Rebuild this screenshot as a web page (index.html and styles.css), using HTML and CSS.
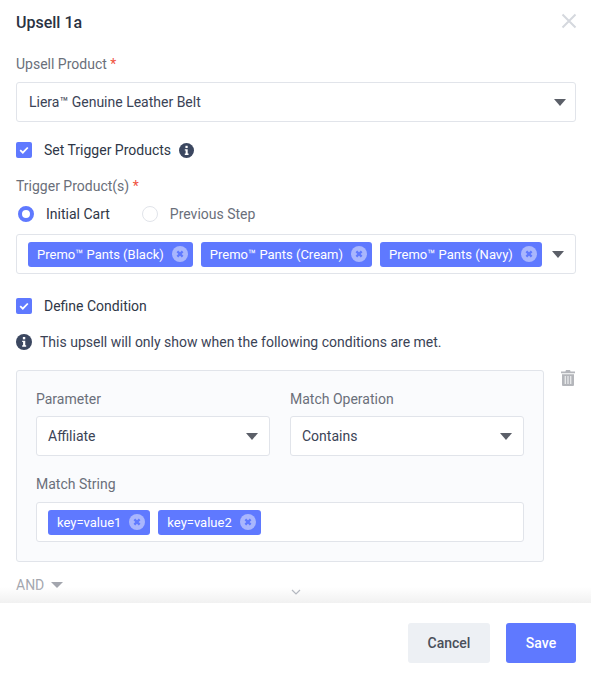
FILE: index.html
```html
<!DOCTYPE html>
<html lang="en">
<head>
<meta charset="utf-8">
<title>Upsell 1a</title>
<link rel="stylesheet" href="styles.css">
</head>
<body>
<div class="modal">
  <div class="content">
    <header class="head">
      <h1 class="title">Upsell 1a</h1>
      <svg class="close" viewBox="0 0 16 16" width="16" height="16"><path d="M1.500 1.500l13 13M14.500 1.500l-13 13" stroke="#d5d8de" stroke-width="2" fill="none"/></svg>
    </header>

    <label class="label label-first">Upsell Product <span class="req">*</span></label>
    <div class="select select-wide">
      <span>Liera™ Genuine Leather Belt</span>
      <i class="caret"></i>
    </div>

    <div class="check check-trigger">
      <span class="box"><svg viewBox="0 0 16 16" width="16" height="16"><path d="M4.200 8.200l2.600 2.500 5-5.200" stroke="#fff" stroke-width="1.800" fill="none"/></svg></span>
      <span class="check-text">Set Trigger Products</span>
      <svg class="info info-trigger" viewBox="0 0 14 14" width="15" height="15"><circle cx="7" cy="7" r="7" fill="#3b4760"/><rect x="6" y="2.600" width="2.100" height="2.100" fill="#fff"/><path d="M5.400 5.900h2.700v4h.8v1.200H5.400V9.900h.8V7.100h-.8z" fill="#fff"/></svg>
    </div>

    <label class="label label-trigger">Trigger Product(s) <span class="req">*</span></label>
    <div class="radios">
      <span class="radio radio-on"></span><span class="radio-text">Initial Cart</span>
      <span class="radio radio-off"></span><span class="radio-text radio-text-off">Previous Step</span>
    </div>

    <div class="multi">
      <span class="tag">Premo™ Pants (Black)<svg class="x" viewBox="0 0 14 14" width="16" height="16"><circle cx="7" cy="7" r="7" fill="#a9b6fd"/><path d="M4.700 4.700l4.600 4.600M9.300 4.700l-4.600 4.600" stroke="#5f79ff" stroke-width="2"/></svg></span>
      <span class="tag">Premo™ Pants (Cream)<svg class="x" viewBox="0 0 14 14" width="16" height="16"><circle cx="7" cy="7" r="7" fill="#a9b6fd"/><path d="M4.700 4.700l4.600 4.600M9.300 4.700l-4.600 4.600" stroke="#5f79ff" stroke-width="2"/></svg></span>
      <span class="tag">Premo™ Pants (Navy)<svg class="x" viewBox="0 0 14 14" width="16" height="16"><circle cx="7" cy="7" r="7" fill="#a9b6fd"/><path d="M4.700 4.700l4.600 4.600M9.300 4.700l-4.600 4.600" stroke="#5f79ff" stroke-width="2"/></svg></span>
      <i class="caret caret-multi"></i>
    </div>

    <div class="check check-define">
      <span class="box"><svg viewBox="0 0 16 16" width="16" height="16"><path d="M4.200 8.200l2.600 2.500 5-5.200" stroke="#fff" stroke-width="1.800" fill="none"/></svg></span>
      <span class="check-text">Define Condition</span>
    </div>

    <div class="notice">
      <svg class="info" viewBox="0 0 14 14" width="16" height="16"><circle cx="7" cy="7" r="7" fill="#3b4760"/><rect x="6" y="2.600" width="2.100" height="2.100" fill="#fff"/><path d="M5.400 5.900h2.700v4h.8v1.200H5.400V9.900h.8V7.100h-.8z" fill="#fff"/></svg>
      <span>This upsell will only show when the following conditions are met.</span>
    </div>

    <div class="cond-row">
      <div class="panel">
        <div class="panel-grid">
          <div>
            <label class="label">Parameter</label>
            <div class="select select-small"><span>Affiliate</span><i class="caret"></i></div>
          </div>
          <div>
            <label class="label">Match Operation</label>
            <div class="select select-small"><span>Contains</span><i class="caret"></i></div>
          </div>
        </div>
        <label class="label label-match">Match String</label>
        <div class="multi multi-match">
          <span class="tag">key=value1<svg class="x" viewBox="0 0 14 14" width="16" height="16"><circle cx="7" cy="7" r="7" fill="#a9b6fd"/><path d="M4.700 4.700l4.600 4.600M9.300 4.700l-4.600 4.600" stroke="#5f79ff" stroke-width="2"/></svg></span>
          <span class="tag">key=value2<svg class="x" viewBox="0 0 14 14" width="16" height="16"><circle cx="7" cy="7" r="7" fill="#a9b6fd"/><path d="M4.700 4.700l4.600 4.600M9.300 4.700l-4.600 4.600" stroke="#5f79ff" stroke-width="2"/></svg></span>
        </div>
      </div>
      <svg class="trash" viewBox="0 0 14 16" width="14" height="16"><path d="M5 0h4l.6 1.400H14v1.800H0V1.400h4.400zM1 4.300h12V15a1 1 0 0 1-1 1H2a1 1 0 0 1-1-1z" fill="#b4b6bb"/><path d="M4.300 6v8M7 6v8M9.700 6v8" stroke="#e9eaec" stroke-width="1.300"/></svg>
    </div>

    <div class="and">AND <i class="caret caret-and"></i></div>

    <div class="fade"></div>
    <svg class="more" viewBox="0 0 10 7" width="10" height="7"><path d="M1 1l4 4 4-4" stroke="#b4b8c0" stroke-width="1.200" fill="none"/></svg>
  </div>

  <footer class="foot">
    <button class="btn btn-cancel">Cancel</button>
    <button class="btn btn-save">Save</button>
  </footer>
</div>
</body>
</html>
```

FILE: styles.css
```css
* { box-sizing: border-box; }
html, body { margin: 0; padding: 0; background: #fff; }
body { font-family: Roboto, "Liberation Sans", sans-serif; font-size: 14px; color: #3b4356; }
.modal { width: 591px; height: 680px; display: flex; flex-direction: column; overflow: hidden; }
.content { position: relative; height: 603px; padding: 0 15px 0 16px; overflow: hidden; flex: none; }

.head { display: flex; justify-content: space-between; align-items: center; height: 46px; }
.title { margin: 0; font-size: 16px; font-weight: 500; line-height: 46px; color: #2a3242; }
.close { margin-right: -1px; margin-top: -5px; }

.label { display: block; font-size: 14px; line-height: 20px; color: #6a6f7a; }
.label-first { margin-top: 8px; margin-bottom: 8px; }
.req { color: #f0533f; }

.select { display: flex; justify-content: space-between; align-items: center; background: #fff; border: 1px solid #e1e4ea; border-radius: 3px; color: #3b4356; }
.select-wide { height: 40px; padding: 0 9px 0 12px; }
.select-small { height: 40px; padding: 0 11px 0 11px; margin-top: 7px; }
.caret { display: block; width: 0; height: 0; border-left: 6.500px solid transparent; border-right: 6.500px solid transparent; border-top: 7px solid #5b5f68; }

.check { display: flex; align-items: center; line-height: 20px; color: #2f3747; }
.check-trigger { margin-top: 18px; height: 20px; }
.check-define { margin-top: 22px; height: 20px; }
.box { width: 16px; height: 16px; border-radius: 2px; background: #5f79ff; display: block; flex: none; }
.box svg { display: block; }
.check-text { margin-left: 12px; }
.info { flex: none; display: block; }
.info-trigger { margin-left: 8px; }

.label-trigger { margin-top: 16px; }
.radios { display: flex; align-items: center; height: 20px; margin-top: 8px; }
.radio { width: 16px; height: 16px; border-radius: 50%; margin-left: 2px; flex: none; }
.radio-on { border: 4.500px solid #5f79ff; background: #fff; }
.radio-off { border: 1px solid #e1e4ea; margin-left: 32px; background: #fff; }
.radio-text { margin-left: 12px; color: #2f3747; }
.radio-text-off { color: #6a6f7a; }

.multi { display: flex; align-items: center; gap: 8px; height: 40px; margin-top: 10px; padding: 0 10px 0 11px; background: #fff; border: 1px solid #e1e4ea; border-radius: 3px; }
.tag { display: inline-flex; align-items: center; height: 25px; padding: 0 5px 0 9px; background: #5f79ff; color: #fff; border-radius: 3px; font-size: 13px; font-weight: 400; white-space: nowrap; }
.x { margin-left: 8px; flex: none; }
.caret-multi { margin-left: 2px; }

.notice { display: flex; align-items: center; gap: 8px; height: 20px; margin-top: 16px; color: #3b4356; }

.cond-row { display: flex; align-items: flex-start; margin-top: 18px; }
.panel { width: 528px; height: 192px; padding: 18px 19px 0; background: #fafbfd; border: 1px solid #e1e4ea; border-radius: 3px; flex: none; }
.panel-grid { display: grid; grid-template-columns: 234px 234px; column-gap: 20px; }
.label-match { margin-top: 18px; }
.multi-match { margin-top: 8px; padding: 0 11px; width: 488px; }
.trash { margin-left: 17px; flex: none; }

.and { display: flex; align-items: center; gap: 7px; margin-top: 13px; line-height: 20px; color: #a3a6ae; }
.caret-and { border-top-color: #a3a6ae; border-left-width: 6px; border-right-width: 6px; border-top-width: 6px; }

.fade { position: absolute; left: 0; right: 0; bottom: 0; height: 16px; background: linear-gradient(to bottom, rgba(240,240,240,0), #f1f1f1); }
.more { position: absolute; left: 291px; bottom: 7px; }

.foot { display: flex; justify-content: flex-end; gap: 16px; padding: 20px 15px 0 0; flex: 1; background: #fff; }
.btn { width: 82px; height: 40px; border: 0; border-radius: 3px; font: 500 14px Roboto, "Liberation Sans", sans-serif; }
.btn-cancel { background: #edf0f4; color: #4a4f5a; }
.btn-save { width: 70px; background: #5f79ff; color: #fff; }
```
